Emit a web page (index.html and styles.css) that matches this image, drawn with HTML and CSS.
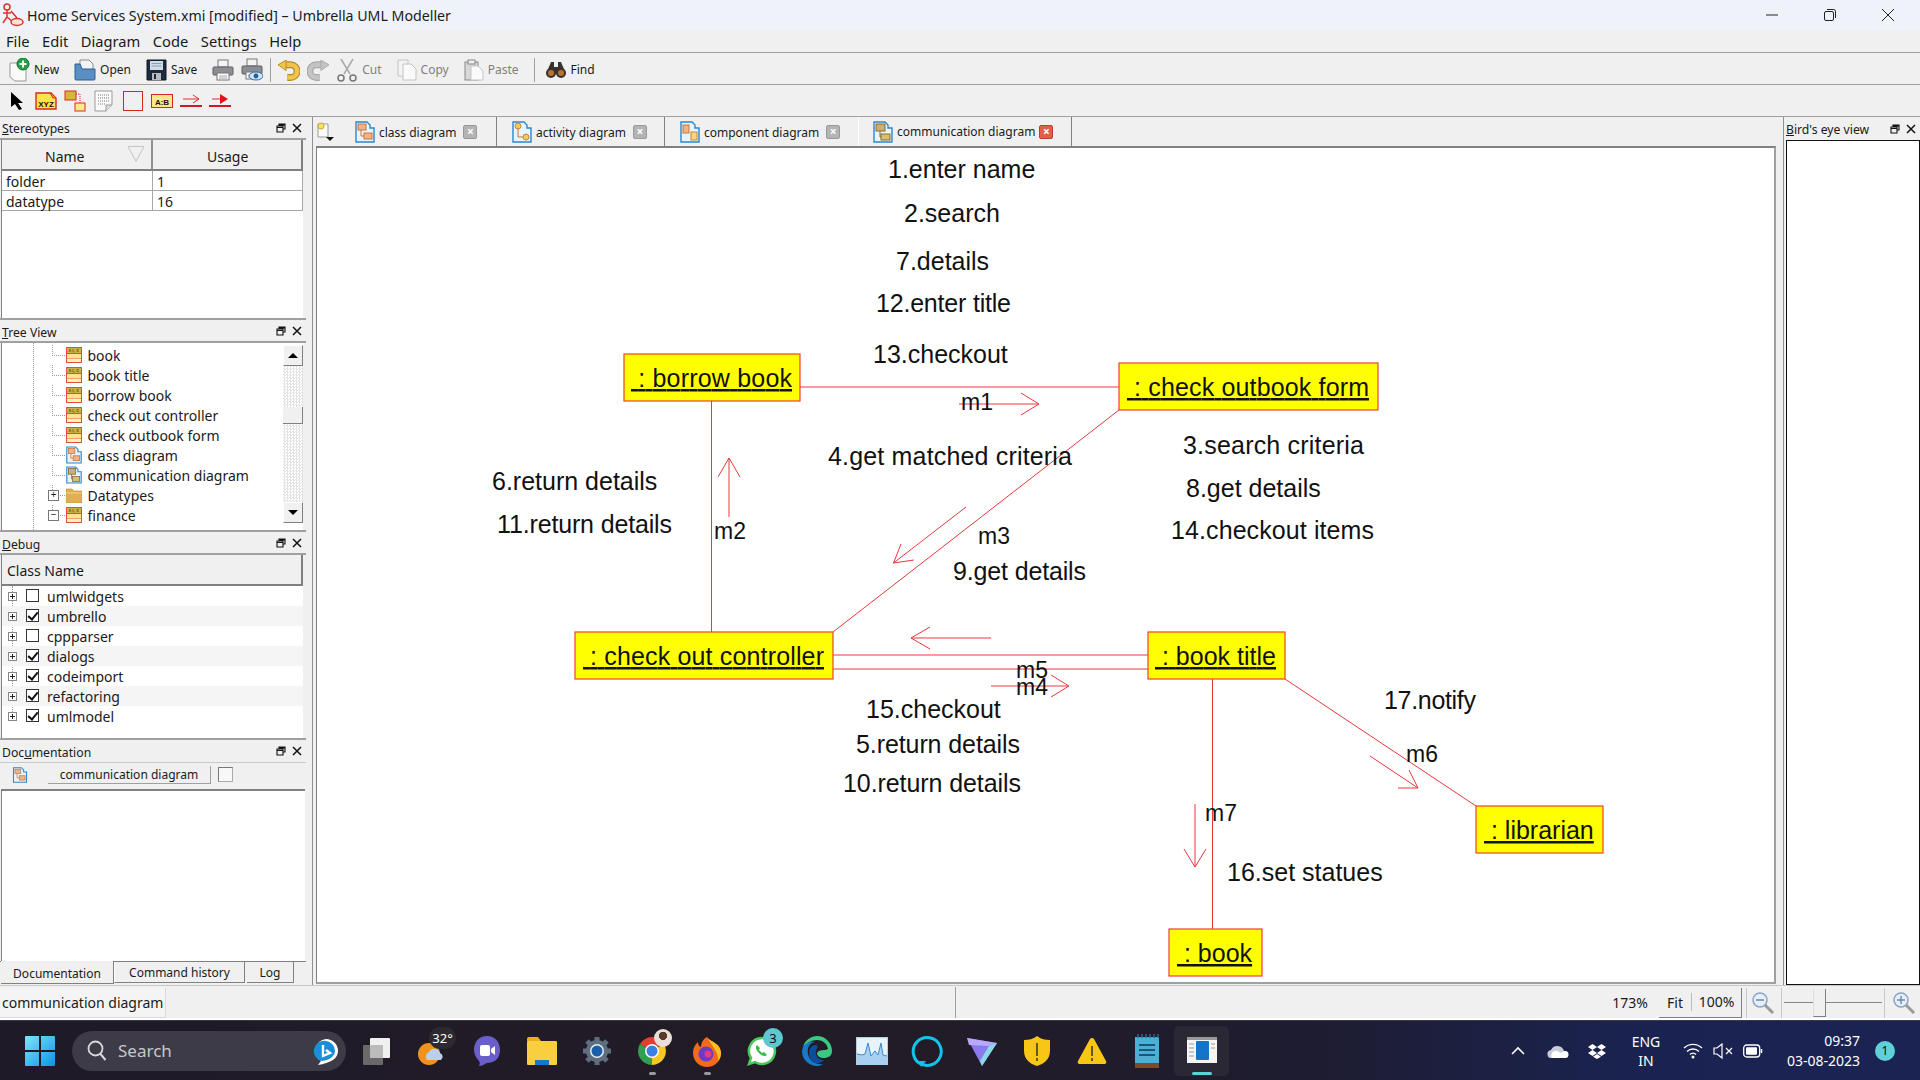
FILE: index.html
```html
<!DOCTYPE html>
<html lang="en">
<head>
    <meta charset="UTF-8">
    <title>Home Services System.xmi [modified] – Umbrella UML Modeller</title>
    <link rel="stylesheet" href="styles.css">
</head>
<body>
    <svg class="sprite" width="0" height="0">
        <symbol id="i-class" viewBox="0 0 16 16">
            <rect x="0.5" y="0.5" width="15" height="15" fill="#fff3b0" stroke="#e0503a"/>
            <rect x="1" y="1" width="14" height="5" fill="#c9b04a"/>
            <path d="M0 6.5h16M0 11h16" stroke="#e0503a" fill="none"/>
            <rect x="1" y="7" width="14" height="4" fill="#ffe48a"/>
            <path d="M3 5l1-3 1 3M7 2v3h1.500M11 2.500h2M11 2.500v2h2" stroke="#7a5a20" stroke-width=".7" fill="none"/>
        </symbol>
        <symbol id="i-diagram" viewBox="0 0 20 22">
            <path d="M1 1h11l3 3v3h4v14H1z" fill="#e8f4fc" stroke="#2a86d0" stroke-width="1.400"/>
            <rect x="3" y="3" width="8" height="6" fill="#f4b183" stroke="#c8763a"/>
            <rect x="9" y="12" width="8" height="6" fill="#f4b183" stroke="#c8763a"/>
            <path d="M6 9v6h3" stroke="#c8763a" fill="none"/>
        </symbol>
        <symbol id="i-activity" viewBox="0 0 20 22">
            <path d="M1 1h11l3 3v3h4v14H1z" fill="#e8f4fc" stroke="#2a86d0" stroke-width="1.400"/>
            <circle cx="6" cy="5" r="3" fill="#f4c95a" stroke="#c8863a"/>
            <circle cx="14" cy="16" r="3" fill="#f4c95a" stroke="#c8863a"/>
            <path d="M6 8v8h5" stroke="#c8763a" fill="none"/>
        </symbol>
        <symbol id="i-component" viewBox="0 0 20 22">
            <path d="M1 1h11l3 3v3h4v14H1z" fill="#e8f4fc" stroke="#2a86d0" stroke-width="1.400"/>
            <rect x="3" y="4" width="6" height="8" fill="#f4b183" stroke="#c8763a"/>
            <rect x="11" y="11" width="6" height="8" fill="#f8d77a" stroke="#c8863a"/>
        </symbol>
        <symbol id="i-comm" viewBox="0 0 20 22">
            <path d="M1 1h11l3 3v3h4v14H1z" fill="#e8f4fc" stroke="#2a86d0" stroke-width="1.400"/>
            <rect x="3" y="3" width="9" height="7" fill="#c9b070" stroke="#8a6a30"/>
            <rect x="8" y="13" width="9" height="6" fill="#d8c070" stroke="#8a6a30"/>
            <path d="M7 10v6h1" stroke="#8a6a30" fill="none"/>
        </symbol>
        <symbol id="i-float" viewBox="0 0 10 10">
            <path d="M3 3V1h6v5H7M1 3h6v6H1zM1 4.500h6M3 2h6" stroke="#111" fill="none" stroke-width="1.100"/>
        </symbol>
        <symbol id="i-close" viewBox="0 0 10 10">
            <path d="M1 1l8 8M9 1l-8 8" stroke="#111" stroke-width="1.500" fill="none"/>
        </symbol>
        <symbol id="i-print" viewBox="0 0 22 22">
            <rect x="6" y="1" width="10" height="7" fill="#f4f4f4" stroke="#777"/>
            <rect x="1" y="8" width="20" height="8" rx="1" fill="#8b8f94" stroke="#5c5f63"/>
            <rect x="5" y="14" width="12" height="7" fill="#fafafa" stroke="#777"/>
            <path d="M7 17h8M7 19h8" stroke="#aaa"/>
        </symbol>
        <symbol id="i-zoom" viewBox="0 0 24 24">
            <circle cx="9" cy="9" r="7" fill="#e8eef6" stroke="#8aa4c4" stroke-width="1.500"/>
            <path d="M14 14l8 8" stroke="#9a9a9a" stroke-width="3"/>
        </symbol>
    </svg>

    <div class="window">
        <div class="titlebar">
            <svg class="app-icon" width="22" height="24" viewBox="0 0 22 24">
                <circle cx="5" cy="4" r="3" fill="none" stroke="#e0302a" stroke-width="1.500"/>
                <path d="M5 7v7M1 10h8M5 14l-4 6M5 14l5 4M9 8l6 7" stroke="#e0302a" stroke-width="1.500" fill="none"/>
                <ellipse cx="15" cy="19" rx="6" ry="3.500" fill="#fbe3d8" stroke="#e0302a" stroke-width="1.500"/>
            </svg>
            <span class="title-text">Home Services System.xmi [modified] – Umbrella UML Modeller</span>
            <div class="win-controls">
                <span class="win-btn"><svg width="14" height="14" viewBox="0 0 14 14"><path d="M1 7h12" stroke="#222"/></svg></span>
                <span class="win-btn"><svg width="14" height="14" viewBox="0 0 14 14"><rect x="1.500" y="3.500" width="9" height="9" rx="1.500" fill="none" stroke="#222"/><path d="M4 1.500h6.500a2 2 0 0 1 2 2V10" fill="none" stroke="#222"/></svg></span>
                <span class="win-btn"><svg width="14" height="14" viewBox="0 0 14 14"><path d="M1 1l12 12M13 1L1 13" stroke="#222"/></svg></span>
            </div>
        </div>

        <div class="menubar">
            <span>File</span><span>Edit</span><span>Diagram</span><span>Code</span><span>Settings</span><span>Help</span>
        </div>

        <div class="toolbar">
            <div class="tool">
                <svg width="22" height="24" viewBox="0 0 22 24"><path d="M2 5h10l6 6v12H7l-5-4z" fill="#fafafa" stroke="#999"/><circle cx="15" cy="6" r="6" fill="#25a244" stroke="#116b2a"/><path d="M15 2.500v7M11.500 6h7" stroke="#fff" stroke-width="2"/></svg>
                <span>New</span>
            </div>
            <div class="tool">
                <svg width="22" height="22" viewBox="0 0 22 22"><path d="M6 1h9l4 4v8H6z" fill="#f4f4f4" stroke="#888"/><path d="M1 5h5l2 5h13v10a1 1 0 0 1-1 1H2a1 1 0 0 1-1-1z" fill="#5a8fc4" stroke="#2c5f94"/></svg>
                <span>Open</span>
            </div>
            <div class="tool">
                <svg width="21" height="22" viewBox="0 0 21 22"><path d="M1 1h19v20H1z" fill="#1e2b3e" stroke="#0e1826"/><rect x="4" y="2" width="13" height="9" fill="#d0dce8"/><path d="M5.500 4.500h10M5.500 7h10" stroke="#8aa0b8"/><rect x="6" y="14" width="9" height="7" fill="#b8bcc0"/><rect x="8" y="15" width="2" height="5" fill="#1e2b3e"/></svg>
                <span>Save</span>
            </div>
            <div class="tool icon-only"><svg width="22" height="22"><use href="#i-print"/></svg></div>
            <div class="tool icon-only">
                <svg width="22" height="24" viewBox="0 0 22 24"><use href="#i-print" width="22" height="22"/><ellipse cx="15" cy="18" rx="7" ry="4" fill="#cfe4f7" stroke="#3a70a8"/><circle cx="15" cy="18" r="2.400" fill="#2a5f98"/></svg>
            </div>
            <span class="tool-sep"></span>
            <div class="tool icon-only">
                <svg width="22" height="22" viewBox="1 0 19 19">
                    <path d="M6 5h6a5 5 0 0 1 0 11H9" fill="none" stroke="#b8882a" stroke-width="6"/>
                    <path d="M6 5h6a5 5 0 0 1 0 11H9" fill="none" stroke="#f0c448" stroke-width="4"/>
                    <path d="M1 5l7-4v9z" fill="#f0c448" stroke="#b8882a" stroke-width=".8"/>
                </svg>
            </div>
            <div class="tool icon-only">
                <svg width="22" height="22" viewBox="2 0 19 19">
                    <path d="M16 5h-6a5 5 0 0 0 0 11h3" fill="none" stroke="#a8a8a8" stroke-width="6"/>
                    <path d="M16 5h-6a5 5 0 0 0 0 11h3" fill="none" stroke="#c4c4c4" stroke-width="4"/>
                    <path d="M21 5l-7-4v9z" fill="#c4c4c4" stroke="#a8a8a8" stroke-width=".8"/>
                </svg>
            </div>
            <div class="tool disabled">
                <svg width="22" height="24" viewBox="0 0 22 24"><path d="M5 1l9 15M17 1L8 16" stroke="#aaa" stroke-width="1.500" fill="none"/><circle cx="5" cy="20" r="3" fill="none" stroke="#777" stroke-width="1.500"/><circle cx="17" cy="20" r="3" fill="none" stroke="#777" stroke-width="1.500"/></svg>
                <span>Cut</span>
            </div>
            <div class="tool disabled">
                <svg width="20" height="22" viewBox="0 0 20 22"><path d="M1 1h10v16H1z" fill="#f4f4f4" stroke="#c4c4c4"/><path d="M6 5h8l5 5v11H6z" fill="#fafafa" stroke="#c4c4c4"/></svg>
                <span>Copy</span>
            </div>
            <div class="tool disabled">
                <svg width="20" height="22" viewBox="0 0 20 22"><rect x="1" y="3" width="13" height="18" fill="#d8d8d8" stroke="#888"/><rect x="4" y="1" width="7" height="4" fill="#eee" stroke="#888"/><path d="M7 7h7l5 5v9H7z" fill="#fafafa" stroke="#c4c4c4"/></svg>
                <span>Paste</span>
            </div>
            <span class="tool-sep"></span>
            <div class="tool find">
                <svg width="22" height="18" viewBox="0 0 22 18"><path d="M6 1h3v5h4V1h3l5 12H1z" fill="#3a3230"/><circle cx="6" cy="12" r="5" fill="#3a3230"/><circle cx="16" cy="12" r="5" fill="#3a3230"/><circle cx="6" cy="12" r="3" fill="#b8742c"/><circle cx="16" cy="12" r="3" fill="#b8742c"/></svg>
                <span>Find</span>
            </div>
        </div>

        <div class="toolbar uml-tools">
            <span class="uml-tool"><svg width="14" height="19" viewBox="0 0 14 19"><path d="M1 1l12 11H8l4 6-3 1-4-6-4 3z" fill="#000"/></svg></span>
            <span class="uml-tool"><svg width="22" height="18" viewBox="0 0 22 18"><path d="M1 1h15l5 5v11H1z" fill="#ffe44a" stroke="#d8281e" stroke-width="1.400"/><path d="M15 1l3 5h3" fill="#f8a030" stroke="#d8281e"/><text class="xyz" x="11" y="15">XYZ</text></svg></span>
            <span class="uml-tool"><svg width="22" height="22" viewBox="0 0 22 22"><rect x="1" y="1" width="11" height="9" fill="#d4b83a" stroke="#d8281e"/><rect x="11" y="13" width="10" height="8" fill="#ffe88a" stroke="#d8281e"/><path d="M12 4h4v9" stroke="#d8281e" stroke-dasharray="1 1" fill="none"/></svg></span>
            <span class="uml-tool"><svg width="19" height="22" viewBox="0 0 19 22"><path d="M1 1h17v14l-6 6H1z" fill="#fafafa" stroke="#999"/><path d="M4 5h11M4 8h11M4 11h11M4 14h7" stroke="#777" stroke-dasharray="1 1"/><path d="M12 21v-6h6" fill="#ddd" stroke="#999"/></svg></span>
            <span class="uml-tool"><svg width="20" height="20" viewBox="0 0 20 20"><rect x=".5" y=".5" width="19" height="19" fill="none" stroke="#d8281e"/></svg></span>
            <span class="uml-tool"><svg width="22" height="14" viewBox="0 0 22 14"><rect x=".5" y=".5" width="21" height="13" fill="#ffe88a" stroke="#d8281e"/><text class="xyz" x="11" y="10.500">A:B</text></svg></span>
            <span class="uml-tool"><svg width="22" height="13" viewBox="0 0 22 13"><path d="M3 5h16M13 1l6 4-6 4" stroke="#e0302a" fill="none"/><path d="M0 12h22" stroke="#c81e1e" stroke-width="2"/></svg></span>
            <span class="uml-tool"><svg width="22" height="13" viewBox="0 0 22 13"><path d="M3 5h8" stroke="#e0302a"/><path d="M11 0l8 5-8 5z" fill="#e81010"/><path d="M0 12h22" stroke="#c81e1e" stroke-width="2"/></svg></span>
        </div>

        <div class="workspace">
            <div class="left-dock">
                <section class="dock dock-stereotypes">
                    <div class="dock-title"><span><u>S</u>tereotypes</span><svg width="10" height="10"><use href="#i-float"/></svg><svg width="10" height="10"><use href="#i-close"/></svg></div>
                    <div class="dock-body">
                        <div class="st-row st-head">
                            <div class="st-name">Name<svg class="sort" width="16" height="16" viewBox="0 0 16 16"><path d="M0 .5h16L8 15.500z" fill="none" stroke="#c4c4c4"/></svg></div>
                            <div class="st-usage">Usage</div>
                        </div>
                        <div class="st-row"><div class="st-name">folder</div><div class="st-usage">1</div></div>
                        <div class="st-row"><div class="st-name">datatype</div><div class="st-usage">16</div></div>
                    </div>
                </section>

                <section class="dock dock-tree">
                    <div class="dock-title"><span><u>T</u>ree View</span><svg width="10" height="10"><use href="#i-float"/></svg><svg width="10" height="10"><use href="#i-close"/></svg></div>
                    <div class="dock-body tree-body">
                        <ul class="tree">
                            <li><svg width="16" height="16"><use href="#i-class"/></svg>book</li>
                            <li><svg width="16" height="16"><use href="#i-class"/></svg>book title</li>
                            <li><svg width="16" height="16"><use href="#i-class"/></svg>borrow book</li>
                            <li><svg width="16" height="16"><use href="#i-class"/></svg>check out controller</li>
                            <li><svg width="16" height="16"><use href="#i-class"/></svg>check outbook form</li>
                            <li><svg width="16" height="18"><use href="#i-diagram"/></svg>class diagram</li>
                            <li><svg width="16" height="18"><use href="#i-comm"/></svg>communication diagram</li>
                            <li class="closed"><svg width="16" height="15" viewBox="0 0 16 15"><path d="M0 1h6l2 2h8v12H0z" fill="#e0b050" stroke="#b88a30" stroke-width=".6"/><path d="M0 5h16" stroke="#f4d488"/></svg>Datatypes</li>
                            <li class="opened"><svg width="16" height="16"><use href="#i-class"/></svg>finance</li>
                        </ul>
                        <div class="scrollbar">
                            <span class="sb-btn"><i class="tri-up"></i></span>
                            <span class="sb-thumb"></span>
                            <span class="sb-btn"><i class="tri-down"></i></span>
                        </div>
                    </div>
                </section>

                <section class="dock dock-debug">
                    <div class="dock-title"><span><u>D</u>ebug</span><svg width="10" height="10"><use href="#i-float"/></svg><svg width="10" height="10"><use href="#i-close"/></svg></div>
                    <div class="dock-body">
                        <div class="debug-head">Class Name</div>
                        <ul class="debug-list">
                            <li><i class="plus"></i><i class="check"></i>umlwidgets</li>
                            <li><i class="plus"></i><i class="check on"></i>umbrello</li>
                            <li><i class="plus"></i><i class="check"></i>cppparser</li>
                            <li><i class="plus"></i><i class="check on"></i>dialogs</li>
                            <li><i class="plus"></i><i class="check on"></i>codeimport</li>
                            <li><i class="plus"></i><i class="check on"></i>refactoring</li>
                            <li><i class="plus"></i><i class="check on"></i>umlmodel</li>
                        </ul>
                    </div>
                </section>

                <section class="dock dock-doc">
                    <div class="dock-title"><span>Doc<u>u</u>mentation</span><svg width="10" height="10"><use href="#i-float"/></svg><svg width="10" height="10"><use href="#i-close"/></svg></div>
                    <div class="doc-head">
                        <svg width="16" height="16"><use href="#i-diagram"/></svg>
                        <span class="doc-name">communication diagram</span>
                        <span class="doc-check"></span>
                    </div>
                    <div class="doc-text"></div>
                    <div class="doc-tabs">
                        <span class="doc-tab active">Documentation</span>
                        <span class="doc-tab history">Command history</span>
                        <span class="doc-tab log">Log</span>
                    </div>
                </section>
            </div>

            <div class="center">
                <div class="tabs">
                    <span class="corner"><svg width="18" height="20" viewBox="0 0 18 20"><path d="M1 2h10v13H1z" fill="#fafafa" stroke="#999"/><circle cx="4" cy="4" r="3" fill="#f8e060" stroke="#c8a830"/><path d="M9 15h8l-4 4z" fill="#111"/></svg></span>
                    <div class="tab tab-class"><svg width="20" height="22"><use href="#i-diagram"/></svg><span>class diagram</span><i class="tab-x">×</i></div>
                    <div class="tab tab-activity"><svg width="20" height="22"><use href="#i-activity"/></svg><span>activity diagram</span><i class="tab-x">×</i></div>
                    <div class="tab tab-component"><svg width="20" height="22"><use href="#i-component"/></svg><span>component diagram</span><i class="tab-x">×</i></div>
                    <div class="tab tab-comm current"><svg width="20" height="22"><use href="#i-comm"/></svg><span>communication diagram</span><i class="tab-x red">×</i></div>
                </div>
                <div class="canvas">
                    <svg class="diagram" width="1457" height="836" viewBox="317 148 1457 836">
                        <path class="wire" d="M800 387H1119M711.500 401V632M1119 410L833 632M833 655H1148M833 669H1148M1212.500 679V929M1285 679L1476 806"/>
                        <path class="wire" d="M959 404H1039M1021 393L1039 404L1021 415"/>
                        <path class="wire" d="M729 517V458M718 477L729 458L740 477"/>
                        <path class="wire" d="M966 507L893.500 563M901 544L893.500 563L914 560"/>
                        <path class="wire" d="M991 638H911M930 627L911 638L930 649"/>
                        <path class="wire" d="M991 686H1069M1051 675L1069 686L1051 697"/>
                        <path class="wire" d="M1370 756L1418 788M1409 770L1418 788L1398 788"/>
                        <path class="wire" d="M1195 804V867M1184 849L1195 867L1206 849"/>

                        <rect class="obj" x="624" y="354" width="176" height="47"/>
                        <rect class="obj" x="1119" y="363" width="259" height="47"/>
                        <rect class="obj" x="575" y="632" width="258" height="47"/>
                        <rect class="obj" x="1148" y="632" width="137" height="47"/>
                        <rect class="obj" x="1476" y="806" width="127" height="47"/>
                        <rect class="obj" x="1169" y="929" width="93" height="47"/>

                        <text class="obj-label" x="631" y="387" textLength="161">&#160;: borrow book</text>
                        <text class="obj-label" x="1127" y="396" textLength="242">&#160;: check outbook form</text>
                        <text class="obj-label" x="583" y="665" textLength="241">&#160;: check out controller</text>
                        <text class="obj-label" x="1155" y="665" textLength="121">&#160;: book title</text>
                        <text class="obj-label" x="1484" y="839">&#160;: librarian</text>
                        <text class="obj-label" x="1177" y="962">&#160;: book</text>

                        <text class="msg" x="888" y="178">1.enter name</text>
                        <text class="msg" x="904" y="222">2.search</text>
                        <text class="msg" x="896" y="270">7.details</text>
                        <text class="msg" x="876" y="312" textLength="135">12.enter title</text>
                        <text class="msg" x="873" y="363">13.checkout</text>
                        <text class="msg" x="828" y="465" textLength="244">4.get matched criteria</text>
                        <text class="msg" x="1183" y="454" textLength="181">3.search criteria</text>
                        <text class="msg" x="1186" y="497">8.get details</text>
                        <text class="msg" x="1171" y="539" textLength="203">14.checkout items</text>
                        <text class="msg" x="492" y="490">6.return details</text>
                        <text class="msg" x="497" y="533" textLength="175">11.return details</text>
                        <text class="msg" x="953" y="580" textLength="133">9.get details</text>
                        <text class="msg" x="866" y="718">15.checkout</text>
                        <text class="msg" x="856" y="753" textLength="164">5.return details</text>
                        <text class="msg" x="843" y="792" textLength="178">10.return details</text>
                        <text class="msg" x="1384" y="709" textLength="92">17.notify</text>
                        <text class="msg" x="1227" y="881">16.set statues</text>

                        <text class="tag" x="961" y="410">m1</text>
                        <text class="tag" x="714" y="539">m2</text>
                        <text class="tag" x="978" y="544">m3</text>
                        <text class="tag" x="1016" y="678">m5</text>
                        <text class="tag" x="1016" y="695">m4</text>
                        <text class="tag" x="1406" y="762">m6</text>
                        <text class="tag" x="1205" y="821">m7</text>
                    </svg>
                </div>
            </div>

            <div class="right-dock">
                <div class="dock-title"><span><u>B</u>ird's eye view</span><svg width="10" height="10"><use href="#i-float"/></svg><svg width="10" height="10"><use href="#i-close"/></svg></div>
                <div class="birds-eye"></div>
            </div>
        </div>

        <div class="statusbar">
            <div class="status-label">communication diagram</div>
            <div class="status-mid"><span class="zoom-pct">173%</span></div>
            <div class="zoom-btns"><span>Fit</span><span>100%</span></div>
            <div class="zoom-icon"><svg width="24" height="24"><use href="#i-zoom"/><path d="M5 9h8" stroke="#6a8cb4" stroke-width="1.500"/></svg></div>
            <div class="slider"><i class="slider-thumb"></i></div>
            <div class="zoom-icon last"><svg width="24" height="24"><use href="#i-zoom"/><path d="M5 9h8M9 5v8" stroke="#6a8cb4" stroke-width="1.500"/></svg></div>
        </div>
    </div>

    <div class="taskbar">
        <svg class="start" width="30" height="30" viewBox="0 0 30 30">
            <defs><linearGradient id="win" x1="0" y1="0" x2="1" y2="1"><stop offset="0" stop-color="#7fe4f8"/><stop offset="1" stop-color="#0a94e8"/></linearGradient></defs>
            <path d="M0 1a1 1 0 0 1 1-1h13v14H0zM16 0h13a1 1 0 0 1 1 1v13H16zM0 16h14v14H1a1 1 0 0 1-1-1zM16 16h14v13a1 1 0 0 1-1 1H16z" fill="url(#win)"/>
        </svg>
        <div class="search">
            <svg width="20" height="22" viewBox="0 0 20 22"><circle cx="8.500" cy="8.500" r="7" fill="none" stroke="#d8d8d8" stroke-width="1.800"/><path d="M13.500 14l5 6" stroke="#d8d8d8" stroke-width="2"/></svg>
            <span>Search</span>
            <svg class="bing" width="26" height="28" viewBox="0 0 26 28"><path d="M13 1a12 12 0 0 1 12 12c0 8-8 12-20 14l3-4A12 12 0 0 1 13 1z" fill="#fff"/><path d="M13 3a10 10 0 0 1 9 10c0 5-5 9-13 10A10 10 0 0 1 13 3z" fill="#1a8fd8"/><path d="M10 7v11l7-3-4-3" fill="none" stroke="#fff" stroke-width="2.400"/></svg>
        </div>

        <div class="tb-apps">
            <span class="tb-app"><svg width="30" height="30" viewBox="0 0 30 30"><rect x="8" y="2" width="20" height="20" rx="1" fill="#f0f0f0"/><rect x="1" y="9" width="20" height="20" rx="1" fill="#777" opacity=".85"/><rect x="8" y="9" width="13" height="13" fill="#bbb"/></svg></span>
            <span class="tb-app"><svg width="30" height="32" viewBox="0 0 30 32"><circle cx="12" cy="19" r="11" fill="#f0921e"/><path d="M10 25a5 5 0 0 1 2-8 6 6 0 0 1 11 1 4 4 0 0 1 1 7z" fill="#b8d0ec"/></svg><b class="weather-temp">32°</b></span>
            <span class="tb-app"><svg width="28" height="32" viewBox="0 0 28 32"><path d="M14 1c8 0 13 6 13 14s-5 13-13 13c-2 0-3 3-8 3 1-2 1-4 0-5-3-3-5-7-5-11C1 7 6 1 14 1z" fill="#6a5fc8"/><rect x="7" y="10" width="10" height="11" rx="2" fill="#fff"/><path d="M18 14l4-3v9l-4-3z" fill="#fff"/></svg></span>
            <span class="tb-app"><svg width="32" height="30" viewBox="0 0 32 30"><path d="M1 3a2 2 0 0 1 2-2h9l3 4H1z" fill="#e8b020"/><rect x="1" y="5" width="30" height="24" rx="1" fill="#f8cf3e"/><rect x="9" y="24" width="14" height="5" fill="#1a78c8"/></svg></span>
            <span class="tb-app"><svg width="30" height="30" viewBox="0 0 30 30"><circle cx="15" cy="15" r="11" fill="#5e6e7e"/><path d="M15 1v28M1 15h28M5 5l20 20M25 5L5 25" stroke="#5e6e7e" stroke-width="5"/><circle cx="15" cy="15" r="7" fill="#e8eef4"/><circle cx="15" cy="15" r="5.500" fill="#1a5fa8"/></svg></span>
            <span class="tb-app dot-under"><svg width="30" height="30" viewBox="0 0 30 30"><path d="M15 15L2.900 8A14 14 0 0 1 27.100 8z" fill="#e04030"/><path d="M15 15L27.100 8A14 14 0 0 1 15 29z" fill="#f8c820"/><path d="M15 15L15 29A14 14 0 0 1 2.900 8z" fill="#30a050"/><circle cx="15" cy="15" r="7" fill="#fff"/><circle cx="15" cy="15" r="5.500" fill="#3a7ee8"/></svg><i class="avatar"></i></span>
            <span class="tb-app dot-under"><svg width="30" height="32" viewBox="0 0 30 32"><path d="M15 2c3 5 14 6 14 16a14 14 0 0 1-28 0C1 12 4 9 6 7c0 3 1 4 3 5 0-4 2-8 6-10z" fill="#f26a1c"/><path d="M15 2c3 5 14 6 14 16 0 3-1 6-3 8 1-8-4-12-11-24z" fill="#f8c020"/><circle cx="14" cy="19" r="7.500" fill="#6a3ac8"/><circle cx="16" cy="19" r="3.500" fill="#e03a80"/></svg></span>
            <span class="tb-app"><svg width="30" height="30" viewBox="0 0 30 30"><path d="M15 2a13 13 0 0 0-11 20L2 28l6-2a13 13 0 1 0 7-24z" fill="#fff" stroke="#4ac85a" stroke-width="2.500"/><path d="M10 9c-2 2-1 5 2 8s6 4 8 2l-3-3-2 1-3-3 1-2z" fill="#3ab84a"/></svg><b class="wa-badge">3</b></span>
            <span class="tb-app"><svg width="32" height="32" viewBox="0 0 32 32"><path d="M16 1a15 15 0 0 1 15 15c0 5-4 7-8 7-4 0-7-2-7-5 2-4 8-2 11-4C26 8 21 5 16 5 9 5 5 9 2 12 4 5 10 1 16 1z" fill="#3cc882"/><path d="M2 12c3-5 8-6 12-5-6 1-8 6-7 12 1 6 7 11 15 10-3 2-5 2-7 2A15 15 0 0 1 1 16z" fill="#1a78c8"/><path d="M8 18c0-5 3-8 7-8 3 0 1 3 0 6-1 5 3 9 8 9-3 3-7 4-9 3-4-1-6-5-6-10z" fill="#0e4e98"/></svg></span>
            <span class="tb-app"><svg width="32" height="28" viewBox="0 0 32 28"><rect x=".5" y=".5" width="31" height="27" fill="#e8f2fa" stroke="#b8cce0"/><path d="M1 17l5 1 3-1 3-11 3 13 4-5 3 4 3-12 2 12 4 1v9H1z" fill="#a8d0f0"/><path d="M1 17l5 1 3-1 3-11 3 13 4-5 3 4 3-12 2 12 4 1" fill="none" stroke="#3a8ac8"/></svg></span>
            <span class="tb-app"><svg width="32" height="32" viewBox="0 0 32 32"><path d="M11 29.500a14 14 0 1 1 5 1z" fill="none" stroke="#12c4ec" stroke-width="3"/><path d="M10 32l5-6H8z" fill="#12c4ec"/></svg></span>
            <span class="tb-app"><svg width="32" height="32" viewBox="0 0 32 32"><path d="M1 3l30 5-15 23z" fill="#8a7af0"/><path d="M1 3l30 5-8 3-20-1z" fill="#b8a8f8"/><path d="M23 11l8-3-15 23-2-5z" fill="#8ad8e8"/></svg></span>
            <span class="tb-app"><svg width="28" height="32" viewBox="0 0 28 32"><path d="M14 1c4 3 8 4 13 4v11c0 8-6 13-13 15C7 29 1 24 1 16V5c5 0 9-1 13-4z" fill="#f8c614"/><path d="M14 8v13M14 23v3" stroke="#333" stroke-width="1.500"/></svg></span>
            <span class="tb-app"><svg width="30" height="28" viewBox="0 0 30 28"><path d="M13 2a2.500 2.500 0 0 1 4 0l12 22a2 2 0 0 1-2 3H3a2 2 0 0 1-2-3z" fill="#f8c614"/><path d="M15 9v10M15 21v3" stroke="#333" stroke-width="1.500"/></svg></span>
            <span class="tb-app"><svg width="24" height="34" viewBox="0 0 24 34"><rect y="3" width="24" height="28" fill="#4ab0d8"/><path d="M3 0v4M7 0v4M11 0v4M15 0v4M19 0v4M23 0v4" stroke="#2a6a88" stroke-width="1.500"/><path d="M4 11h16M4 16h16M4 21h16" stroke="#1a5878" stroke-width="2"/><rect y="29" width="24" height="5" fill="#7a4a2a"/></svg></span>
            <span class="tb-app active"><svg width="30" height="28" viewBox="0 0 30 28"><rect width="30" height="26" fill="#f4f4f4"/><rect y="0" width="30" height="3" fill="#999"/><rect x="9" y="4" width="13" height="19" rx="1" fill="#1474c8"/><path d="M2 7h5M2 11h5M2 15h5M2 19h5M24 7h4M24 11h4" stroke="#999"/></svg></span>
        </div>

        <div class="tray">
            <span class="tray-chevron"><svg width="16" height="10" viewBox="0 0 16 10"><path d="M2 8l6-6 6 6" fill="none" stroke="#fff" stroke-width="1.600"/></svg></span>
            <span class="tray-cloud"><svg width="22" height="14" viewBox="0 0 22 14"><path d="M5 14a4 4 0 0 1-1-8 7 7 0 0 1 13 1 3.500 3.500 0 0 1 1 7z" fill="#c8ccd8"/><path d="M5 14a4 4 0 0 1 8-5l5-2a3.500 3.500 0 0 1 0 7z" fill="#fff"/></svg></span>
            <span class="tray-box"><svg width="18" height="16" viewBox="0 0 18 16"><path d="M4.500 1L0 4l4.500 3L9 4zM13.500 1L9 4l4.500 3L18 4zM4.500 7L0 10l4.500 3L9 10zM13.500 7L9 10l4.500 3L18 10zM9 11l-4 2.700L9 16l4-2.300z" fill="#fff"/></svg></span>
            <span class="tray-lang">ENG<br>IN</span>
            <span class="tray-icon"><svg width="20" height="16" viewBox="0 0 20 16"><path d="M1 5a13 13 0 0 1 18 0M4 8.500a8.500 8.500 0 0 1 12 0M7 11.500a4 4 0 0 1 6 0" fill="none" stroke="#fff" stroke-width="1.300"/><circle cx="10" cy="14" r="1.500" fill="#fff"/></svg></span>
            <span class="tray-icon"><svg width="20" height="16" viewBox="0 0 20 16"><path d="M1 5h3l5-4v14l-5-4H1z" fill="none" stroke="#fff" stroke-width="1.200"/><path d="M13 5l6 6M19 5l-6 6" stroke="#fff" stroke-width="1.200"/></svg></span>
            <span class="tray-icon"><svg width="20" height="14" viewBox="0 0 20 14"><rect x=".7" y="1" width="16" height="12" rx="3" fill="none" stroke="#fff" stroke-width="1.300"/><rect x="3" y="3.300" width="11" height="7.400" rx="1" fill="#fff"/><path d="M18.500 5v4" stroke="#fff" stroke-width="1.500"/></svg></span>
            <span class="tray-clock">09:37<br>03-08-2023</span>
            <span class="tray-badge-wrap"><b class="tray-badge">1</b></span>
        </div>
    </div>
</body>
</html>
```

FILE: styles.css
```css
* {
    box-sizing: border-box;
}

body {
    margin: 0;
    width: 1920px;
    height: 1080px;
    overflow: hidden;
    display: flex;
    flex-direction: column;
    font-family: "Noto Sans", sans-serif;
    font-size: 14px;
    color: #1a1a1a;
    background-color: #f0f0f0;
}

ul {
    list-style: none;
    margin: 0;
    padding: 0;
}

.sprite {
    position: absolute;
}

.window {
    height: 1020px;
    display: flex;
    flex-direction: column;
}

/* title, menu, toolbars */
.titlebar {
    height: 30px;
    display: flex;
    align-items: center;
    padding-left: 2px;
    background-color: #eff3f9;
}

.title-text {
    margin-left: 3px;
    font-size: 14.200px;
}

.win-controls {
    margin-left: auto;
    display: flex;
    padding-right: 3px;
}

.win-btn {
    width: 58px;
    height: 30px;
    display: flex;
    align-items: center;
    justify-content: center;
}

.menubar {
    height: 23px;
    display: flex;
    align-items: center;
    gap: 12.500px;
    padding-left: 6px;
    font-size: 14.700px;
    border-bottom: 1px solid #a0a0a0;
}

.toolbar {
    height: 32px;
    display: flex;
    align-items: center;
    padding: 2px 0 0 8px;
    border-bottom: 1px solid #a0a0a0;
    font-size: 12px;
}

.tool {
    display: flex;
    align-items: center;
    gap: 4px;
    margin-right: 15px;
}

.tool.icon-only {
    margin-right: 7px;
}

.tool.disabled {
    color: #808080;
}

.tool-sep {
    width: 1px;
    height: 24px;
    margin: 0 7px 0 0;
    background-color: #a0a0a0;
}

.tool.find {
    margin-left: 3px;
}

.uml-tools {
    padding-left: 2px;
    padding-top: 0;
}

.uml-tool {
    width: 29px;
    display: flex;
    justify-content: center;
}

.xyz {
    font-family: "Liberation Sans", sans-serif;
    font-size: 8px;
    font-weight: bold;
    text-anchor: middle;
    fill: #111;
}

/* main area */
.workspace {
    height: 868px;
    display: flex;
}

.left-dock {
    width: 306px;
    display: flex;
    flex-direction: column;
}

.dock {
    display: flex;
    flex-direction: column;
    border-bottom: 2px solid #a0a0a0;
    margin-bottom: 0;
}

.dock-stereotypes {
    height: 203px;
}

.dock-tree {
    height: 212px;
}

.dock-debug {
    height: 208px;
}

.dock-doc {
    height: 245px;
    border-bottom: none;
}

.dock-title {
    height: 23px;
    flex: none;
    display: flex;
    align-items: center;
    gap: 6px;
    padding: 0 4px 0 2px;
    font-size: 12.200px;
    border-bottom: 2px solid #a0a0a0;
}

.dock-title span {
    margin: 2px auto 0 0;
}

.dock-tree .dock-title span,
.dock-debug .dock-title span {
    margin-top: 4px;
}

.dock-body {
    flex: 1;
    min-height: 0;
    margin: 0 3px 0 1px;
    background-color: #fff;
    border-left: 1px solid #808080;
}

.st-row {
    display: flex;
    height: 20px;
    line-height: 21px;
    border-bottom: 1px solid #a8a8a8;
    border-right: 1px solid #a8a8a8;
}

.st-name {
    width: 151px;
    padding-left: 4px;
    border-right: 1px solid #a8a8a8;
    position: relative;
}

.st-usage {
    flex: 1;
    padding-left: 4px;
}

.st-head {
    height: 31px;
    line-height: 33px;
    background-color: #f0f0f0;
    border-bottom: 2px solid #808080;
    border-right: 2px solid #808080;
}

.st-head .st-name {
    padding-left: 43px;
    border-right: 2px solid #909090;
}

.st-head .st-usage {
    padding-left: 54px;
}

.sort {
    position: absolute;
    left: 126px;
    top: 6px;
}

/* tree */
.tree-body {
    display: flex;
    position: relative;
}

.tree {
    flex: 1;
    padding-top: 2px;
    overflow: hidden;
    position: relative;
}

.tree::before {
    content: "";
    position: absolute;
    left: 31px;
    top: 0;
    bottom: 0;
    border-left: 1px dotted #999;
}

.tree li {
    height: 20px;
    display: flex;
    align-items: center;
    padding-left: 64px;
    position: relative;
}

.tree li svg {
    margin-right: 5.500px;
}

.tree li::before {
    content: "";
    position: absolute;
    left: 50px;
    top: 0;
    height: 10px;
    width: 12px;
    border-left: 1px dotted #999;
    border-bottom: 1px dotted #999;
}

.tree .closed::after,
.tree .opened::after {
    position: absolute;
    left: 46px;
    top: 5px;
    width: 9px;
    height: 9px;
    border: 1px solid #777;
    background-color: #fff;
    font-size: 10px;
    line-height: 7px;
    text-align: center;
}

.tree .closed::after {
    content: "+";
}

.tree .opened::after {
    content: "−";
}

.scrollbar {
    width: 20px;
    margin: 2px 0 7px;
    display: flex;
    flex-direction: column;
    justify-content: space-between;
    position: relative;
    background: repeating-conic-gradient(#e4e4e4 0 25%, #fff 0 50%) 0 0 / 3px 3px;
}

.sb-btn {
    height: 21px;
    background-color: #f0f0f0;
    border: 1px solid #fff;
    border-right-color: #808080;
    border-bottom-color: #808080;
    display: flex;
    align-items: center;
    justify-content: center;
}

.sb-thumb {
    position: absolute;
    top: 62px;
    left: 0;
    width: 20px;
    height: 17px;
    background-color: #f0f0f0;
    border-right: 1px solid #808080;
    border-bottom: 1px solid #808080;
}

.tri-up,
.tri-down {
    width: 0;
    height: 0;
    border-left: 5px solid transparent;
    border-right: 5px solid transparent;
}

.tri-up {
    border-bottom: 5px solid #000;
}

.tri-down {
    border-top: 5px solid #000;
}

/* debug */
.debug-head {
    height: 31px;
    line-height: 31px;
    padding-left: 5px;
    background-color: #f0f0f0;
    border-bottom: 2px solid #808080;
    border-right: 2px solid #808080;
}

.debug-list {
    position: relative;
}

.debug-list::before {
    content: "";
    position: absolute;
    left: 10px;
    top: 0;
    height: 130px;
    border-left: 1px dotted #999;
}

.debug-list li {
    height: 20px;
    display: flex;
    align-items: center;
    padding-left: 6px;
    position: relative;
}

.debug-list li:nth-child(even) {
    background-color: #f5f5f5;
}

.plus {
    width: 9px;
    height: 9px;
    border: 1px solid #888;
    background: linear-gradient(#222, #222) center / 5px 1px no-repeat, linear-gradient(#222, #222) center / 1px 5px no-repeat, #fff;
    margin-right: 9px;
    position: relative;
}

.check {
    width: 13px;
    height: 13px;
    border: 1px solid #333;
    background-color: #fff;
    margin-right: 8px;
    margin-top: -2px;
    position: relative;
}

.check.on::before {
    content: "";
    position: absolute;
    left: 3px;
    top: 0;
    width: 4px;
    height: 8px;
    border-right: 2px solid #111;
    border-bottom: 2px solid #111;
    transform: rotate(40deg);
}

/* documentation */
.doc-head {
    height: 26px;
    flex: none;
    display: flex;
    align-items: center;
    padding: 0 0 3px 12px;
}

.dock-doc .dock-title {
    height: 23px;
    border-bottom: 1px solid #c8c8c8;
}

.doc-name {
    width: 163px;
    height: 18px;
    margin-left: 20px;
    text-align: center;
    font-size: 12px;
    line-height: 17px;
    border-right: 1px solid #a0a0a0;
    border-bottom: 1px solid #a0a0a0;
}

.doc-check {
    width: 15px;
    height: 15px;
    margin-left: 7px;
    background-color: #f8f8f8;
    border: 1px solid #aaa;
    border-left-color: #777;
    border-top-color: #777;
}

.doc-text {
    height: 172px;
    flex: none;
    margin-right: 1px;
    margin-left: 1px;
    background-color: #fff;
    border-top: 2px solid #808080;
    border-left: 1px solid #808080;
}

.doc-tabs {
    flex: 1;
    display: flex;
    font-size: 12px;
    padding-left: 1px;
    border-top: 1px solid #808080;
}

.doc-tab {
    height: 21px;
    text-align: center;
    line-height: 21px;
    border-right: 1px solid #808080;
    border-bottom: 1px solid #808080;
}

.doc-tab.active {
    width: 113px;
    height: 23px;
    margin-top: -1px;
    line-height: 26px;
    background-color: #f0f0f0;
}

.doc-tab.history {
    width: 131px;
    border-left: 1px solid #fff;
}

.doc-tab.log {
    width: 47px;
    margin-left: 2px;
}

/* centre */
.center {
    flex: 1;
    display: flex;
    flex-direction: column;
    margin-left: 6px;
    border-left: 1px solid #909090;
}

.tabs {
    height: 29px;
    flex: none;
    display: flex;
    align-items: center;
    font-size: 12px;
}

.corner {
    width: 42px;
    display: flex;
    padding-left: 4px;
}

.tab {
    height: 29px;
    display: flex;
    align-items: center;
    gap: 4px;
}

.tab span {
    margin-top: 1px;
}

.tab-class {
    width: 142px;
    border-right: 1px solid #808080;
}

.tab-activity {
    width: 168px;
    padding-left: 15px;
    border-right: 1px solid #808080;
}

.tab-component {
    width: 194px;
    padding-left: 15px;
    border-right: 1px solid #fff;
}

.tab-comm {
    width: 213px;
    padding-left: 14px;
    border-right: 1px solid #808080;
}

.tab-comm span {
    margin-top: -1px;
}

.tab-x {
    width: 14px;
    height: 14px;
    margin-left: 3px;
    background-color: #b4b4b4;
    border: 1px solid #999;
    border-radius: 2px;
    color: #fff;
    font-style: normal;
    font-weight: bold;
    font-size: 12px;
    line-height: 11px;
    text-align: center;
}

.tab-x.red {
    margin-left: 0;
    background-color: #e0604a;
    border-color: #b8402c;
}

.canvas {
    width: 1460px;
    height: 838px;
    margin-left: 3px;
    background-color: #fff;
    border-top: 2px solid #808080;
    border-left: 1px solid #808080;
    border-right: 2px solid #a0a0a0;
    border-bottom: 2px solid #a0a0a0;
}

.diagram {
    display: block;
}

.wire {
    fill: none;
    stroke: #e8383c;
    stroke-width: 1;
}

.obj {
    fill: #ffff00;
    stroke: #f04030;
    stroke-width: 1.200;
}

.obj-label,
.msg,
.tag {
    font-family: "Liberation Sans", sans-serif;
    font-size: 25px;
    fill: #111;
}

.obj-label {
    text-decoration: underline;
}

.tag {
    font-size: 23px;
}

.right-dock {
    width: 137px;
    display: flex;
    flex-direction: column;
    border-left: 1px solid #909090;
}

.right-dock .dock-title {
    border-bottom: none;
}

.birds-eye {
    height: 845px;
    margin-left: 2px;
    background-color: #fff;
    border: 1px solid #111;
}

/* status bar */
.statusbar {
    height: 35px;
    flex: none;
    display: flex;
    align-items: center;
    padding-top: 1px;
    border-top: 1px solid #c8c8c8;
    border-bottom: 2px solid #fff;
}

.status-label {
    width: 166px;
    height: 30px;
    line-height: 30px;
    padding-left: 2px;
    background-color: #f4f4f4;
    border-right: 1px solid #d8d8d8;
    border-bottom: 1px solid #d8d8d8;
}

.status-mid {
    width: 1493px;
    height: 100%;
    display: flex;
    align-items: center;
    justify-content: flex-end;
    padding-right: 11px;
}

.status-mid::before {
    content: "";
    width: 1px;
    height: 100%;
    margin-right: auto;
    margin-left: 789px;
    background-color: #a0a0a0;
}

.zoom-btns {
    width: 83px;
    height: 30px;
    display: flex;
    align-items: center;
    border-right: 1px solid #808080;
    border-bottom: 1px solid #808080;
}

.zoom-btns span {
    text-align: center;
    width: 32px;
}

.zoom-btns span + span {
    width: 50px;
    height: 18px;
    line-height: 18px;
    border-left: 1px solid #bbb;
}

.zoom-icon {
    width: 36px;
    height: 30px;
    margin-left: 4px;
    display: flex;
    align-items: center;
    padding-left: 4px;
    border-left: 1px solid #c8c8c8;
    border-right: 1px solid #c8c8c8;
}

.zoom-icon.last {
    width: 32px;
    margin-left: 0;
    padding-left: 7px;
    border-right: none;
}

.slider {
    width: 102px;
    height: 30px;
    position: relative;
    background: linear-gradient(#888, #888) center / 98px 1px no-repeat;
}

.slider-thumb {
    position: absolute;
    left: 31px;
    top: 1px;
    width: 13px;
    height: 28px;
    background-color: #f0f0f0;
    border-right: 1px solid #808080;
    border-bottom: 1px solid #808080;
    border-left: 1px solid #ddd;
}

/* taskbar */
.taskbar {
    height: 60px;
    flex: none;
    display: flex;
    align-items: center;
    padding-left: 25px;
    color: #fff;
    background: linear-gradient(90deg, #1e1a28 0%, #221c26 45%, #1e1c30 68%, #1a2350 85%, #1a2352 100%);
    border-top: 1px solid #3a3a44;
}

.start {
    flex: none;
}

.search {
    width: 274px;
    height: 40px;
    margin-left: 17px;
    display: flex;
    align-items: center;
    padding-left: 15px;
    position: relative;
    font-size: 17px;
    color: #c8c8c8;
    background-color: #3d3b47;
    border-radius: 20px;
}

.search span {
    margin-left: 11px;
}

.bing {
    position: absolute;
    right: 7px;
    top: 7px;
}

.tb-apps {
    display: flex;
    margin-left: 3px;
}

.tb-app {
    width: 55px;
    height: 50px;
    display: flex;
    align-items: center;
    justify-content: center;
    position: relative;
    border-radius: 5px;
}

.tb-app.active {
    background-color: #2a2835;
}

.tb-app.active::after,
.dot-under::after {
    content: "";
    position: absolute;
    bottom: 1px;
    left: 50%;
    width: 7px;
    height: 3px;
    margin-left: -3px;
    border-radius: 2px;
    background-color: #9a9a9a;
}

.tb-app.active::after {
    width: 20px;
    margin-left: -10px;
    background-color: #5fd0d8;
}

.weather-temp {
    position: absolute;
    left: 25px;
    top: 1px;
    width: 27px;
    height: 22px;
    border-radius: 11px;
    background-color: #2c2a30;
    font-size: 13px;
    font-weight: normal;
    line-height: 22px;
    text-align: center;
}

.wa-badge {
    position: absolute;
    left: 29px;
    top: 2px;
    width: 20px;
    height: 20px;
    border-radius: 50%;
    background-color: #5cc8d0;
    color: #111;
    font-size: 13px;
    font-weight: normal;
    line-height: 20px;
    text-align: center;
}

.avatar {
    position: absolute;
    left: 30px;
    top: 3px;
    width: 18px;
    height: 18px;
    border-radius: 50%;
    background: radial-gradient(circle at 50% 38%, #5a3a2a 0 28%, #e8e0d8 30% 100%);
}

.tray {
    margin-left: auto;
    width: 420px;
    display: flex;
    align-items: center;
    padding-right: 10px;
    font-size: 14px;
}

.tray span {
    display: flex;
    align-items: center;
    justify-content: center;
}

.tray-chevron {
    width: 36px;
}

.tray-cloud {
    width: 44px;
}

.tray-box {
    width: 34px;
}

.tray .tray-lang {
    width: 64px;
    display: block;
    text-align: center;
    line-height: 19px;
}

.tray-icon {
    width: 30px;
}

.tray .tray-clock {
    width: 92px;
    display: block;
    text-align: right;
    line-height: 20px;
}

.tray-badge-wrap {
    width: 50px;
}

.tray-badge {
    width: 20px;
    height: 20px;
    border-radius: 50%;
    background-color: #5fd0d8;
    color: #111;
    font-size: 12px;
    font-weight: normal;
    line-height: 20px;
    text-align: center;
}
```
